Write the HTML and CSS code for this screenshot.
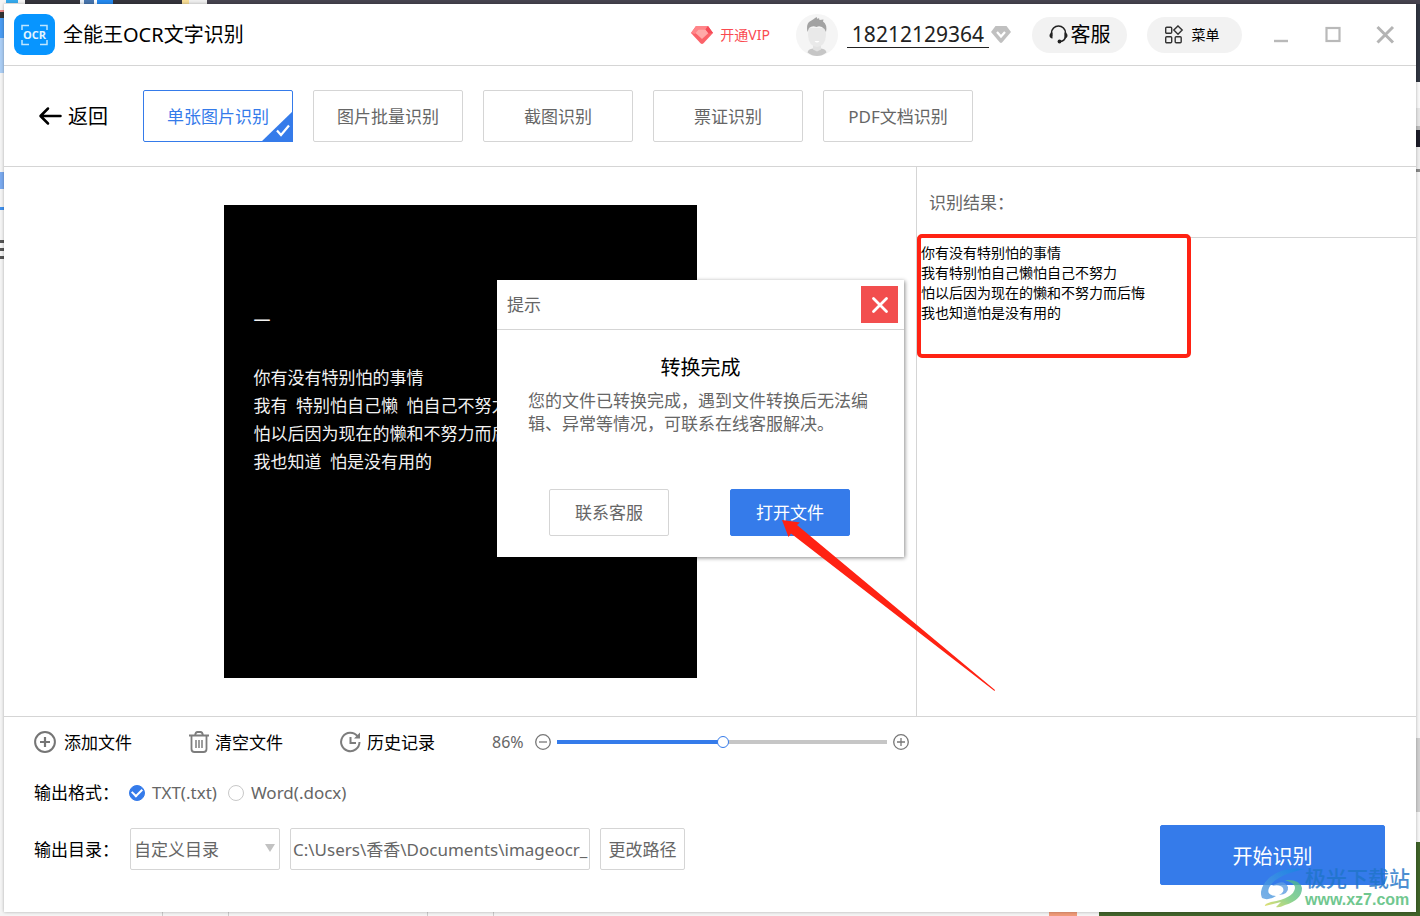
FILE: index.html
```html
<!DOCTYPE html>
<html lang="zh-CN">
<head>
<meta charset="utf-8">
<meta name="viewport" content="width=device-width, initial-scale=1">
<title>全能王OCR文字识别</title>
<link rel="stylesheet" href="styles.css">
</head>
<body>
<div class="window">
  <header class="titlebar">
    <svg class="logo" width="41" height="41" viewBox="0 0 41 41" aria-hidden="true">
      <rect width="41" height="41" rx="9" fill="#0795ff"/>
      <path d="M8 16v-4.500h7M26 11.500h7V16M33 26v4.500h-7M15 30.500H8V26" fill="none" stroke="#bfe6ff" stroke-width="1.500"/>
      <text class="logo-text" x="20.500" y="24.500" text-anchor="middle">OCR</text>
    </svg>
    <h1 class="app-name">全能王OCR文字识别</h1>
    <div class="account">
      <a class="vip" href="#">
        <svg width="22" height="18" viewBox="0 0 22 18" aria-hidden="true">
          <path d="M5 0h12l5 7-9.500 10.300q-1.500 1.400-3 0L0 7z" fill="#fb6269"/>
          <path d="M5 0h12l-2.500 3.500h-7L4 8 0 7z" fill="#ff8589"/>
          <path d="M7.500 3.500h7L17.500 7 11 13 4.500 7z" fill="#ffa9a8"/>
          <path d="M17 0l5 7-4.500.500-3-4z" fill="#f54b58"/>
        </svg>
        <span>开通VIP</span>
      </a>
      <svg class="avatar" width="42" height="42" viewBox="0 0 42 42" aria-hidden="true">
        <circle cx="21" cy="21" r="21" fill="#f5f5f5"/>
        <path d="M11.500 38.500Q12 35 17 34.500l4 2 4-2q5 .500 5.500 4Q26 42 21 42t-9.500-3.500z" fill="#c6c6c6"/>
        <path d="M17 30h8v5.500l-4 2-4-2z" fill="#e2e2e2"/>
        <path d="M12.500 14h17l.500 7q-.500 11-9 12-8.500-1-9-12z" fill="#e9e9e9"/>
        <path d="M11.500 18Q10 11 13 8l4-2.500L20.500 3l1 2L23 4l.500 2 4-.500-.500 2q4.500 3 3 10.500l-1.500-3q-4-4-8-2-4-2-7.500 1z" fill="#a2a2a2"/>
        <path d="M18.500 27h5q-2.500 3-5 0z" fill="#fff"/>
      </svg>
      <a class="phone" href="#">18212129364</a>
      <svg class="badge" width="20" height="18" viewBox="0 0 20 18" aria-hidden="true">
        <path d="M4.500 0h11L20 6l-8.700 10.300q-1.300 1.500-2.600 0L0 6z" fill="#c0c0c0"/>
        <path d="M6 6l4 4.500L14 6" fill="none" stroke="#fff" stroke-width="2.200"/>
      </svg>
      <button class="pill pill-service" type="button">
        <svg width="19" height="19" viewBox="0 0 19 19" aria-hidden="true">
          <path d="M2.500 11V8a7 7 0 0 1 14 0v4q-1 4-5 4.500" fill="none" stroke="#222" stroke-width="1.600"/>
          <path d="M3.500 7.500v6Q.500 13 .500 10.500t3-3zM15.500 7.500v6q3-.500 3-3t-3-3z" fill="#222"/>
          <circle cx="10.500" cy="16.500" r="1.900" fill="#222"/>
        </svg>
        <span>客服</span>
      </button>
      <button class="pill pill-menu" type="button">
        <svg width="20" height="20" viewBox="0 0 20 20" fill="none" stroke="#333" stroke-width="1.400" aria-hidden="true">
          <rect x="1.700" y="2.200" width="6" height="6" rx="1"/>
          <path d="M14 .900L18.200 5.100 14 9.300 9.800 5.100z"/>
          <rect x="1.700" y="11.700" width="6" height="6" rx="1"/>
          <rect x="11.200" y="11.700" width="6" height="6" rx="1"/>
        </svg>
        <span>菜单</span>
      </button>
    </div>
    <div class="window-buttons">
      <button type="button" aria-label="最小化"><svg width="20" height="20" viewBox="0 0 20 20"><path d="M3 16h14" stroke="#b9b9b9" stroke-width="2.400"/></svg></button>
      <button type="button" aria-label="最大化"><svg width="20" height="20" viewBox="0 0 20 20"><rect x="3.500" y="3" width="13" height="13" fill="none" stroke="#b9b9b9" stroke-width="2.200"/></svg></button>
      <button type="button" aria-label="关闭"><svg width="20" height="20" viewBox="0 0 20 20"><path d="M2.500 2l15.500 15.500M18 2L2.500 17.500" stroke="#b4b4b4" stroke-width="3"/></svg></button>
    </div>
  </header>

  <nav class="modes">
    <button class="back" type="button">
      <svg width="24" height="20" viewBox="0 0 24 20" fill="none" stroke="#000" stroke-width="2.500" stroke-linecap="round" stroke-linejoin="round" aria-hidden="true"><path d="M22.500 10H3M10 2.500L2.500 10l7.500 7.500"/></svg>
      <span>返回</span>
    </button>
    <div class="tabs">
      <button class="tab tab-active" type="button">单张图片识别
        <svg class="tab-check" width="32" height="31" viewBox="0 0 32 31" aria-hidden="true"><path d="M32 0v31H0z" fill="#357bea"/><path d="M16 19.500l4 4.500 8-9.500" fill="none" stroke="#fff" stroke-width="2.200"/></svg>
      </button>
      <button class="tab" type="button">图片批量识别</button>
      <button class="tab" type="button">截图识别</button>
      <button class="tab" type="button">票证识别</button>
      <button class="tab" type="button">PDF文档识别</button>
    </div>
  </nav>

  <main class="workspace">
    <section class="preview">
      <div class="photo">
        <p class="photo-dash">一</p>
        <p>你有没有特别怕的事情</p>
        <p>我有&ensp;特别怕自己懒&ensp;怕自己不努力</p>
        <p>怕以后因为现在的懒和不努力而后悔</p>
        <p>我也知道&ensp;怕是没有用的</p>
      </div>
    </section>
    <section class="result">
      <h2 class="result-title">识别结果：</h2>
      <div class="result-text">
        <p>你有没有特别怕的事情</p>
        <p>我有特别怕自己懒怕自己不努力</p>
        <p>怕以后因为现在的懒和不努力而后悔</p>
        <p>我也知道怕是没有用的</p>
        <div class="highlight"></div>
      </div>
    </section>

    <div class="dialog" role="dialog" aria-labelledby="dialog-title">
      <div class="dialog-bar">
        <span id="dialog-title">提示</span>
        <button class="dialog-close" type="button" aria-label="关闭提示"><svg width="37" height="37" viewBox="0 0 37 37"><path d="M12.500 12.500l13 13M25.500 12.500l-13 13" stroke="#fff" stroke-width="2.800" stroke-linecap="round"/></svg></button>
      </div>
      <div class="dialog-body">
        <h3>转换完成</h3>
        <p>您的文件已转换完成，遇到文件转换后无法编辑、异常等情况，可联系在线客服解决。</p>
        <div class="dialog-actions">
          <button class="btn" type="button">联系客服</button>
          <button class="btn btn-primary" type="button">打开文件</button>
        </div>
      </div>
      <svg class="pointer" width="216" height="174" viewBox="0 0 216 174" aria-hidden="true"><path d="M1 2l18 2.500-3 2.500L214 172l-.500 1L10 15.500 7.500 19z" fill="#ff2213"/></svg>
    </div>
  </main>

  <footer class="controls">
    <div class="options">
      <div class="tools">
        <button class="tool" type="button">
          <svg width="22" height="22" viewBox="0 0 22 22" fill="none" stroke="#757575" aria-hidden="true"><circle cx="11" cy="11" r="9.900" stroke-width="2"/><path d="M11 6v10M6 11h10" stroke-width="2.200"/></svg>
          <span>添加文件</span>
        </button>
        <button class="tool tool-tight" type="button">
          <svg width="20" height="22" viewBox="0 0 20 22" fill="none" stroke="#7d7d7d" stroke-width="1.800" aria-hidden="true"><path d="M0 4.500h20M6 4.500Q6.500 1 8.500 1h3q2 0 2.500 3.500M2.500 4.500V18q0 3 3 3h9q3 0 3-3V4.500"/><path d="M7 9v8M10 9v8M13 9v8" stroke-width="1.500"/></svg>
          <span>清空文件</span>
        </button>
        <button class="tool tool-tight" type="button">
          <svg width="21" height="22" viewBox="0 0 21 22" fill="none" stroke="#7d7d7d" stroke-width="2" aria-hidden="true"><path d="M17.500 5.200A9.200 9.200 0 1 0 19.500 11"/><path d="M10.500 6v6H16"/><path d="M20 1.500v6h-6z" fill="#7d7d7d" stroke="none"/></svg>
          <span>历史记录</span>
        </button>
        <div class="zoom">
          <label for="zoom">86%</label>
          <button type="button" aria-label="缩小"><svg width="16" height="16" viewBox="0 0 16 16" fill="none" stroke="#777" stroke-width="1.300"><circle cx="8" cy="8" r="7.300"/><path d="M4 8h8"/></svg></button>
          <input id="zoom" type="range" min="0" max="170" value="86">
          <button type="button" aria-label="放大"><svg width="16" height="16" viewBox="0 0 16 16" fill="none" stroke="#777" stroke-width="1.300"><circle cx="8" cy="8" r="7.300"/><path d="M4 8h8M8 4v8"/></svg></button>
        </div>
      </div>
      <div class="formats" role="radiogroup" aria-labelledby="format-label">
        <span class="field-label" id="format-label">输出格式：</span>
        <label class="format"><input type="radio" name="format" checked>TXT(.txt)</label>
        <label class="format"><input type="radio" name="format">Word(.docx)</label>
      </div>
      <div class="output">
        <label class="field-label" for="dir">输出目录：</label>
        <div class="select">
          <select id="dir"><option>自定义目录</option></select>
          <svg class="select-arrow" width="10" height="8" viewBox="0 0 10 8" aria-hidden="true"><path d="M0 0h10L5 8z" fill="#c2c2c2"/></svg>
        </div>
        <input class="path" type="text" aria-label="输出路径" value="C:\Users\香香\Documents\imageocr_">
        <button class="btn btn-path" type="button">更改路径</button>
      </div>
    </div>
    <button class="btn btn-primary btn-start" type="button">开始识别</button>
  </footer>

  <div class="watermark">
    <svg width="44" height="40" viewBox="0 0 44 40" aria-hidden="true">
      <defs>
        <linearGradient id="wave-blue" x1="0" y1="1" x2="1" y2="0"><stop offset="0" stop-color="#5b9fe0"/><stop offset="1" stop-color="#1583e4"/></linearGradient>
        <linearGradient id="wave-green" x1="0" y1="1" x2="1" y2="0"><stop offset="0" stop-color="#e0d94e"/><stop offset=".5" stop-color="#6dc878"/><stop offset="1" stop-color="#48b39a"/></linearGradient>
      </defs>
      <path d="M44 1Q21-2 8 10-3 21 1 30q6 3 14-2Q5 27 8 20 14 7 44 1z" fill="url(#wave-blue)"/>
      <path d="M11 18q12-8 16 1 1 7-9 8 6-3 4-7-3-4-11-2z" fill="#5d9de2"/>
      <path d="M24 12q15-1 17 8 0 12-17 17-6 3-9 2l5-5-16 4q-1-2 6-4 23-4 24-14 0-5-10-8z" fill="url(#wave-green)"/>
    </svg>
    <div class="watermark-text"><span class="watermark-name">极光下载站</span><span class="watermark-url">www.xz7.com</span></div>
  </div>
</div>
</body>
</html>
```
FILE: styles.css
```css
* { box-sizing: border-box; }

body {
  margin: 0;
  padding: 4px;
  min-height: 100vh;
  display: flex;
  font-family: "Noto Sans", "Noto Sans CJK SC", sans-serif;
  font-size: 17px;
  line-height: 24px;
  font-weight: 400;
  color: #000;
  background:
    linear-gradient(#35a9ec, #35a9ec) 6px 0 / 12px 3px no-repeat,
    linear-gradient(90deg, transparent 25px, #35343c 25px 80px, #e8eef5 80px 84px, #4774ac 84px 94px, #fff 94px 97px, #2388ee 97px 113px, #35343c 113px 182px, #f6dc95 182px 189px, #eee 189px 207px, #46434f 207px) 0 0 / 100% 4px no-repeat,
    linear-gradient(transparent 10px, #e88 10px 12px, #333 12px 18px, #4a9bf1 18px 38px, #aacdf4 38px 73px, transparent 73px 172px, #7aa9ee 172px 189px, transparent 189px 207px, #4090ec 207px 210px, transparent 210px 240px, #555 240px 243px, transparent 243px 248px, #555 248px 251px, transparent 251px 256px, #555 256px 259px, transparent 259px) 0 0 / 4px 100% no-repeat,
    linear-gradient(#303540 82px, #f8f8f8 82px 108px, #e6e6e6 108px 126px, #bbb 126px 130px, #1c1c28 130px 147px, #eee 147px 169px, #888 169px 172px, #f6f6f6 172px 738px, #cfcfcf 738px 812px, #f6f6f6 812px 842px, #3f6328 842px) 100% 0 / 4px 100% no-repeat,
    linear-gradient(90deg, transparent 162px, #ccc 162px 163px, transparent 163px 228px, #ccc 228px 229px, transparent 229px 427px, #ccc 427px 428px, transparent 428px 493px, #ccc 493px 494px, transparent 494px 1049px, #f09a78 1049px 1077px, transparent 1077px 1099px, #42632b 1099px) 0 100% / 100% 4px no-repeat,
    #f4f4f4;
}

h1, h2, h3, p { margin: 0; font-weight: inherit; }
button, input, select { font: inherit; color: inherit; }
button { padding: 0; border: 0; background: none; cursor: pointer; }
svg { display: block; flex: none; }
a { text-decoration: none; }

.window {
  position: relative;
  flex: 1;
  display: flex;
  flex-direction: column;
  min-width: 0;
  background: #fff;
  box-shadow: 0 0 3px rgba(0, 0, 0, .3);
}

.titlebar {
  display: flex;
  align-items: center;
  height: 62px;
  padding: 0 21px 0 10px;
  border-bottom: 1px solid #d5d5d5;
}
.logo-text { font: 700 11px "Open Sans", sans-serif; fill: #e5f5ff; }
.app-name { margin-left: 8px; font-size: 20px; }
.account { display: flex; align-items: center; margin-left: auto; }
.vip { display: flex; align-items: center; gap: 7px; margin-right: 26px; font-size: 14px; color: #fa4a50; }
.phone {
  margin-left: 9px;
  padding: 0 5px;
  font-size: 21px;
  line-height: 25px;
  color: #222;
  border-bottom: 1px solid #222;
}
.badge { margin: 0 21px 0 2px; }
.pill {
  display: flex;
  align-items: center;
  justify-content: center;
  width: 95px;
  height: 36px;
  border-radius: 18px;
  background: #f2f2f2;
  color: #000;
}
.pill-service { gap: 3px; margin-right: 20px; font-size: 20px; }
.pill-menu { gap: 8px; padding-right: 6px; font-size: 14px; }
.window-buttons { display: flex; gap: 32px; margin-left: 29px; }

.modes {
  display: flex;
  align-items: center;
  padding: 24px 34px;
  border-bottom: 1px solid #d5d5d5;
}
.back { display: flex; align-items: center; gap: 6px; font-size: 20px; color: #000; }
.back span, .tool span { padding-top: 2px; }
.tabs { display: flex; gap: 20px; margin-left: 35px; }
.tab {
  position: relative;
  width: 150px;
  height: 52px;
  padding-top: 2px;
  border: 1px solid #d5d5d5;
  border-radius: 2px;
  color: #666;
}
.tab-active { border-color: #357bea; color: #357bea; }
.tab-check { position: absolute; right: -1px; bottom: -1px; }

.workspace { position: relative; flex: 1; display: flex; }
.preview { flex: 1; display: flex; align-items: center; justify-content: center; padding: 38px 0; }
.photo {
  width: 473px;
  aspect-ratio: 1;
  padding: 102px 0 0 30px;
  overflow: hidden;
  background: #000;
  color: #f2f2f2;
  line-height: 28px;
  white-space: nowrap;
}
.photo-dash { margin-bottom: 29px; }
.result { width: 500px; border-left: 1px solid #d5d5d5; }
.result-title {
  height: 71px;
  padding: 24px 12px;
  border-bottom: 1px solid #d5d5d5;
  font-size: 17px;
  color: #666;
}
.result-text { position: relative; padding: 5px 4px; font-size: 14px; line-height: 20px; }
.highlight {
  position: absolute;
  left: 0;
  top: -4px;
  width: 274px;
  height: 124px;
  border: 4px solid #ff2213;
  border-radius: 5px;
}

.dialog {
  position: absolute;
  left: calc(50% - 213px);
  top: 113px;
  width: 407px;
  background: #fff;
  color: #666;
  box-shadow: 1px 1px 4px rgba(0, 0, 0, .45);
}
.dialog-bar {
  display: flex;
  align-items: center;
  justify-content: space-between;
  height: 50px;
  padding: 0 6px 0 10px;
  border-bottom: 1px solid #d5d5d5;
}
.dialog-close { background: #f24e4e; }
.dialog-body { padding: 24px 31px 21px; }
.dialog-body h3 { font-size: 20px; line-height: 28px; text-align: center; color: #000; }
.dialog-body p { margin-top: 7px; line-height: 23px; }
.dialog-actions { display: flex; gap: 61px; margin: 54px 21px 0; }
.btn {
  width: 120px;
  height: 47px;
  padding-top: 1px;
  border: 1px solid #d5d5d5;
  border-radius: 2px;
  color: #666;
}
.btn-primary { border-color: #357bea; background: #357bea; color: #fff; }
.pointer { position: absolute; left: 284px; top: 238px; }

.controls {
  display: flex;
  align-items: flex-end;
  justify-content: space-between;
  padding: 0 31px 27px 30px;
  border-top: 1px solid #d5d5d5;
}
.options { padding-bottom: 15px; }
.tools { display: flex; align-items: center; gap: 57px; height: 50px; }
.tool { display: flex; align-items: center; gap: 8px; }
.tool-tight { gap: 6px; }
.zoom { display: flex; align-items: center; font-size: 16px; color: #666; }
.zoom button { margin: 0 6px 0 11px; }
.zoom input {
  appearance: none;
  width: 330px;
  height: 12px;
  margin: 0;
  background: linear-gradient(90deg, #357bea 51%, #c6c6c6 51%) center / 100% 4px no-repeat;
}
.zoom input::-webkit-slider-thumb {
  appearance: none;
  width: 12px;
  height: 12px;
  border: 1px solid #357bea;
  border-radius: 50%;
  background: #fff;
}
.zoom input + button { margin: 0 0 0 6px; }

.formats { display: flex; align-items: center; height: 52px; }
.field-label { width: 95px; }
.format { display: flex; align-items: center; gap: 7px; margin-right: 11px; color: #666; }
.format input {
  appearance: none;
  display: grid;
  place-items: center;
  width: 16px;
  height: 16px;
  margin: 0;
  border: 1px solid #c8c8c8;
  border-radius: 50%;
}
.format input:checked { border-color: #357bea; background: #357bea; }
.format input:checked::before {
  content: "";
  width: 8px;
  height: 5px;
  margin-bottom: 3px;
  border: solid #fff;
  border-width: 0 0 2px 2px;
  transform: rotate(-45deg);
}
.output { display: flex; align-items: center; margin-top: 9px; }
.output .field-label { width: 96px; padding-top: 2px; }
.select { position: relative; }
.select select {
  display: block;
  appearance: none;
  width: 150px;
  height: 42px;
  padding: 2px 3px 0;
  border: 1px solid #d5d5d5;
  border-radius: 2px;
  background: #fff;
  color: #666;
}
.select-arrow { position: absolute; right: 5px; top: 16px; pointer-events: none; }
.path {
  width: 300px;
  height: 42px;
  margin: 0 10px;
  padding: 0 0 2px 2px;
  border: 1px solid #d5d5d5;
  border-radius: 2px;
  color: #666;
}
.btn-path { width: 85px; height: 42px; }
.btn-start { width: 225px; height: 60px; padding-top: 3px; font-size: 20px; }

.watermark {
  position: absolute;
  right: 6px;
  bottom: 3px;
  display: flex;
  align-items: center;
  opacity: .8;
  pointer-events: none;
}
.watermark-text { display: flex; flex-direction: column; }
.watermark-name { font-size: 21px; line-height: 24px; font-weight: 500; color: #1f74c8; }
.watermark-url { font: 700 16px/19px "Liberation Sans", sans-serif; color: #4dba74; }
```
